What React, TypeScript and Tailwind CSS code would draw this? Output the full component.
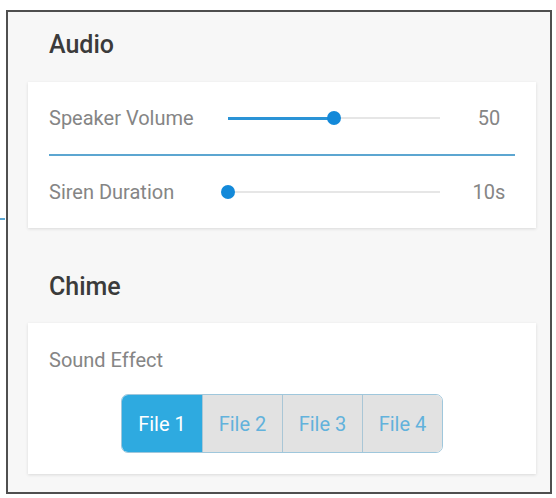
import React from "react";

function Slider({ pct }: { pct: number }) {
  return (
    <div className="relative h-[16px] w-[212px]">
      <div className="absolute left-0 right-0 top-[7px] h-[2px] bg-[#e6e6e6]" />
      <div
        className="absolute left-0 top-[6.5px] h-[3px] bg-[#2a93d6]"
        style={{ width: `${pct}%` }}
      />
      <div
        className="absolute top-[1px] h-[14px] w-[14px] -translate-x-1/2 rounded-full bg-[#1389d9]"
        style={{ left: `${pct}%` }}
      />
    </div>
  );
}

function Row({ label, pct, value }: { label: string; pct: number; value: string }) {
  return (
    <div className="flex h-[72px] items-center">
      <div className="w-[179px] text-[20px] text-[#858585]">{label}</div>
      <Slider pct={pct} />
      <div className="ml-auto w-[52px] text-center text-[20px] text-[#858585]">{value}</div>
    </div>
  );
}

export default function App() {
  const files = ["File 1", "File 2", "File 3", "File 4"];
  return (
    <div
      className="relative h-[498px] w-[556px] bg-white pl-[6px] pt-[10px]"
      style={{ fontFamily: "Roboto, 'Liberation Sans', sans-serif" }}
    >
      <div className="absolute left-0 top-[218px] h-[2px] w-[5px] bg-[#5aa6d2]" />
      <div className="h-[484px] w-[546px] border-2 border-[#4f4f4f] bg-[#f7f7f7]">
        <div className="pl-[41px] pt-[18px] text-[25px] font-medium leading-[30px] text-[#3b3b3b]">
          Audio
        </div>
        <div className="ml-[20px] mt-[22px] w-[508px] bg-white px-[21px] shadow-[0_1px_3px_rgba(0,0,0,0.12)]">
          <Row label="Speaker Volume" pct={50} value="50" />
          <div className="h-[2px] bg-[#5ca6d1]" />
          <Row label="Siren Duration" pct={0} value="10s" />
        </div>
        <div className="pl-[41px] pt-[44px] text-[25px] font-medium leading-[30px] text-[#3b3b3b]">
          Chime
        </div>
        <div className="ml-[20px] mt-[21px] w-[508px] bg-white px-[21px] pb-[21px] pt-[24px] shadow-[0_1px_3px_rgba(0,0,0,0.12)]">
          <div className="text-[20px] leading-[26px] text-[#858585]">Sound Effect</div>
          <div className="mt-[21px] flex justify-center">
            <div className="flex h-[59px] overflow-hidden rounded-[7px] border border-[#9fc7dc]">
              {files.map((f, i) => (
                <div
                  key={f}
                  className={
                    i === 0
                      ? "flex w-[80px] items-center justify-center bg-[#2eaae0] text-[20px] text-white"
                      : "flex w-[80px] items-center justify-center border-l border-[#a9c6d6] bg-[#e2e2e2] text-[20px] text-[#62b2dc]"
                  }
                >
                  {f}
                </div>
              ))}
            </div>
          </div>
        </div>
      </div>
    </div>
  );
}
